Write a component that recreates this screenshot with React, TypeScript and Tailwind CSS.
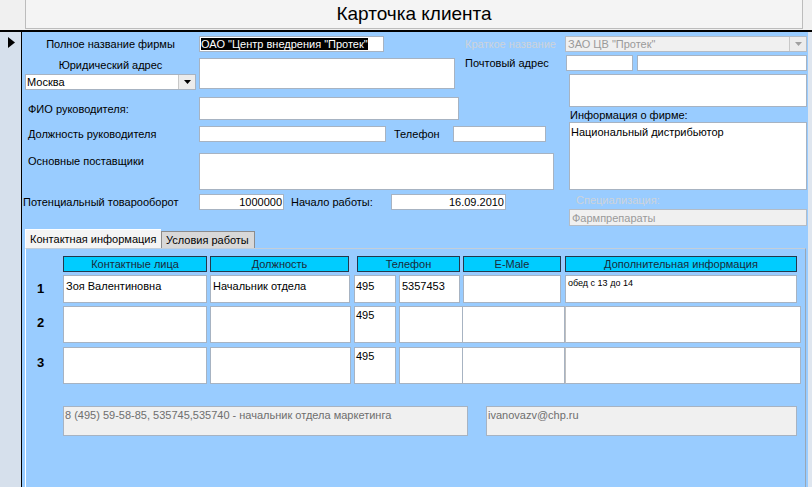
function Arrow({ disabled }: { disabled?: boolean }) {
  return (
    <div className="flex h-full w-[17px] items-center justify-center border-l border-[#c8c8c8] bg-[#ececec]">
      <svg width="9" height="6" viewBox="0 0 9 6">
        <path d="M1 1h7L4.5 5z" fill={disabled ? "#a0a0a0" : "#000"} />
      </svg>
    </div>
  );
}

export default function App() {
  const box = "border border-[#a7b3c2] bg-white";
  const head = "flex h-[16px] items-center justify-center border border-[#23384d] bg-[#00ccff] text-[#1b2a3a]";
  return (
    <div className="flex h-[487px] w-[812px] flex-col overflow-hidden whitespace-nowrap bg-[#f0f0f0] font-['Liberation_Sans',Arial,sans-serif] text-[11px] leading-[14px] text-black">
      {/* заголовок */}
      <div className="flex h-[32px] border-b-2 border-black">
        <div className="w-[25px]" />
        <div className="flex h-[29px] w-[778px] items-center justify-center border-x border-b border-[#bcbcbc] bg-[#f4f4f4] text-[19px] leading-[22px]">
          Карточка клиента
        </div>
      </div>

      <div className="flex flex-1">
        <div className="w-[22px] border-r border-black bg-[#d6e0ec] pl-[8px] pt-[5px]">
          <svg width="7" height="11" viewBox="0 0 7 11">
            <path d="M0 0l7 5.5L0 11z" fill="#000" />
          </svg>
        </div>

        <div className="flex w-[786px] flex-col bg-[#99ccff]">
          <div className="flex h-[197px]">
            {/* левая часть */}
            <div className="w-[440px] shrink-0">
              <div className="mt-[4px] flex h-[16px] items-center">
                <div className="w-[177px] text-center">Полное название фирмы</div>
                <div className={`${box} h-[16px] w-[185px] shrink-0 pl-[1px]`}>
                  <span className="bg-black text-white">ОАО "Центр внедрения "Протек"</span>
                </div>
              </div>

              <div className="mt-[4px] flex">
                <div className="ml-[3px] flex w-[171px] flex-col">
                  <div className="flex h-[18px] items-center justify-center">Юридический адрес</div>
                  <div className={`${box} flex h-[16px] items-center`}>
                    <span className="flex-1 pl-[1px]">Москва</span>
                    <Arrow />
                  </div>
                </div>
                <div className={`${box} ml-[3px] mt-[2px] h-[31px] w-[256px] shrink-0`} />
              </div>

              <div className="mt-[7px] flex h-[23px] items-center">
                <div className="w-[177px] pl-[6px]">ФИО руководителя:</div>
                <div className={`${box} h-[23px] w-[260px] shrink-0`} />
              </div>

              <div className="mt-[6px] flex h-[16px] items-center">
                <div className="w-[177px] shrink-0 pl-[6px]">Должность руководителя</div>
                <div className={`${box} h-[16px] w-[187px] shrink-0`} />
                <div className="ml-[8px] w-[59px] shrink-0">Телефон</div>
                <div className={`${box} h-[16px] w-[93px] shrink-0`} />
              </div>

              <div className="mt-[11px] flex">
                <div className="w-[177px] shrink-0 pl-[6px] pt-[1px]">Основные поставщики</div>
                <div className={`${box} h-[37px] w-[355px] shrink-0`} />
              </div>

              <div className="mt-[4px] flex h-[16px] items-center">
                <div className="w-[177px] shrink-0 pl-[1px]">Потенциальный товарооборот</div>
                <div className={`${box} h-[16px] w-[85px] shrink-0 pr-[1px] text-right`}>1000000</div>
                <div className="ml-[7px] w-[100px] shrink-0">Начало работы:</div>
                <div className={`${box} h-[16px] w-[115px] shrink-0 pr-[1px] text-right`}>16.09.2010</div>
              </div>
            </div>

            {/* правая часть */}
            <div className="w-[346px] shrink-0">
              <div className="mt-[4px] flex h-[16px] items-center">
                <div className="w-[103px] shrink-0 pl-[3px] text-[#cdd3da]">Краткое название</div>
                <div className="flex h-[16px] w-[242px] shrink-0 items-center border border-[#b4bcc6] bg-[#f0f0f0] text-[#9a9a9a]">
                  <span className="flex-1 pl-[2px]">ЗАО ЦВ "Протек"</span>
                  <Arrow disabled />
                </div>
              </div>

              <div className="mt-[3px] flex h-[16px] items-center">
                <div className="w-[104px] shrink-0 pl-[3px]">Почтовый адрес</div>
                <div className={`${box} h-[16px] w-[67px] shrink-0`} />
                <div className={`${box} ml-[4px] h-[16px] w-[170px] shrink-0`} />
              </div>

              <div className={`${box} ml-[107px] mt-[3px] h-[33px] w-[238px]`} />
              <div className="ml-[108px] flex h-[15px] items-end">Информация о фирме:</div>
              <div className={`${box} ml-[107px] h-[68px] w-[238px] pl-[1px] pt-[2px]`}>Национальный дистрибьютор</div>
              <div className="ml-[114px] flex h-[19px] items-center text-[#cdd3da]">Специализация:</div>
              <div className="ml-[107px] flex h-[17px] w-[238px] items-center border border-[#b4bcc6] bg-[#f0f0f0] pl-[2px] text-[#9a9a9a]">
                Фармпрепараты
              </div>
            </div>
          </div>

          {/* вкладки */}
          <div className="flex h-[19px] items-end pl-[3px]">
            <div className="flex h-[19px] w-[136px] items-center border-l border-t border-white bg-[#f4f4f4] pl-[4px]">
              Контактная информация
            </div>
            <div className="flex h-[17px] w-[94px] items-center border border-b-0 border-[#8c8c8c] bg-[#d8d8d8] pl-[4px]">
              Условия работы
            </div>
          </div>

          <div className="ml-[3px] flex w-[781px] flex-1 flex-col border-l border-r border-t border-l-white border-r-[#9aa6b4] border-t-[#c4ced9]">
            <div className="mt-[7px] flex">
              <div className="w-[37px] shrink-0" />
              <div className={`${head} w-[144px]`}>Контактные лица</div>
              <div className={`${head} ml-[3px] w-[139px]`}>Должность</div>
              <div className={`${head} ml-[8px] w-[103px]`}>Телефон</div>
              <div className={`${head} ml-[3px] w-[98px]`}>E-Male</div>
              <div className={`${head} ml-[4px] w-[232px]`}>Дополнительная информация</div>
            </div>

            <div className="mt-[3px] flex h-[28px]">
              <div className="w-[37px] shrink-0 pl-[11px] pt-[7px] text-[13px] font-bold">1</div>
              <div className={`${box} w-[144px] pl-[2px] pt-[3px]`}>Зоя Валентиновна</div>
              <div className={`${box} ml-[3px] w-[140px] pl-[2px] pt-[3px]`}>Начальник отдела</div>
              <div className={`${box} ml-[4px] w-[42px] pl-[1px] pt-[3px]`}>495</div>
              <div className={`${box} ml-[3px] w-[61px] pl-[2px] pt-[3px]`}>5357453</div>
              <div className={`${box} ml-[3px] w-[98px]`} />
              <div className={`${box} ml-[4px] w-[232px] pl-[2px] pt-[2px] text-[9px] leading-[11px]`}>обед с 13 до 14</div>
            </div>

            <div className="mt-[3px] flex h-[37px]">
              <div className="w-[37px] shrink-0 pl-[11px] pt-[10px] text-[13px] font-bold">2</div>
              <div className={`${box} w-[144px]`} />
              <div className={`${box} ml-[3px] w-[141px]`} />
              <div className={`${box} ml-[3px] w-[42px] pl-[1px] pt-[1px]`}>495</div>
              <div className={`${box} ml-[3px] w-[64px]`} />
              <div className={`${box} w-[102px] border-l-0`} />
              <div className={`${box} w-[236px] border-l-[#c0c0c0]`} />
            </div>

            <div className="mt-[4px] flex h-[37px]">
              <div className="w-[37px] shrink-0 pl-[11px] pt-[9px] text-[13px] font-bold">3</div>
              <div className={`${box} w-[144px]`} />
              <div className={`${box} ml-[3px] w-[141px]`} />
              <div className={`${box} ml-[3px] w-[42px] pl-[1px] pt-[1px]`}>495</div>
              <div className={`${box} ml-[3px] w-[64px]`} />
              <div className={`${box} w-[102px] border-l-0`} />
              <div className={`${box} w-[236px] border-l-[#c0c0c0]`} />
            </div>

            <div className="mt-[22px] flex">
              <div className="w-[37px] shrink-0" />
              <div className="h-[30px] w-[405px] border border-[#a7b3c2] bg-[#f0f0f0] pl-[1px] pt-[1px] text-[#6e6e6e]">
                8 (495) 59-58-85, 535745,535740 - начальник отдела маркетинга
              </div>
              <div className="ml-[18px] h-[30px] w-[311px] border border-[#a7b3c2] bg-[#f0f0f0] pl-[1px] pt-[1px] text-[#6e6e6e]">
                ivanovazv@chp.ru
              </div>
            </div>
          </div>
        </div>

        <div className="flex-1 bg-[#dfe6ef]" />
      </div>
    </div>
  );
}
